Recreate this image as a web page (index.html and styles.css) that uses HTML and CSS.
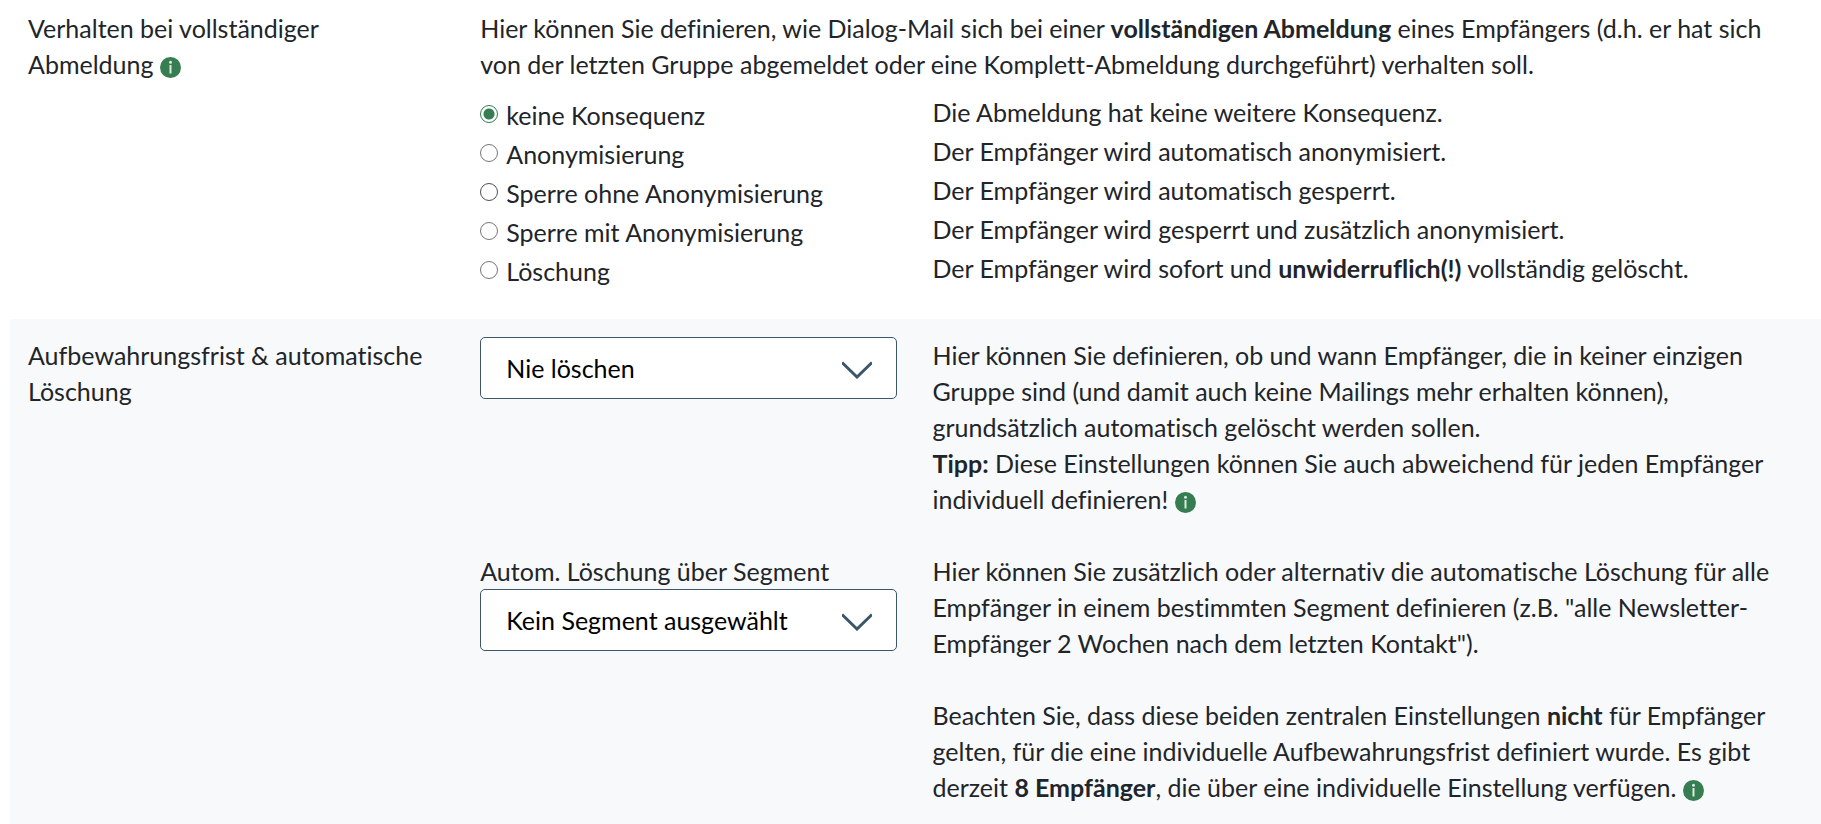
FILE: index.html
```html
<!DOCTYPE html>
<html lang="de">
<head>
<meta charset="utf-8">
<title>Einstellungen zur Abmeldung</title>
<link rel="stylesheet" href="styles.css">
</head>
<body>
<svg class="sprite" aria-hidden="true">
  <symbol id="info" viewBox="0 0 21 21">
    <circle cx="10.5" cy="10.5" r="10.5" fill="#367d52"/>
    <circle cx="10.5" cy="5.2" r="1.5" fill="#dcebe1"/>
    <path d="M10.5 8v8.5" stroke="#dcebe1" stroke-width="2"/>
  </symbol>
  <symbol id="chevron" viewBox="0 0 30 18">
    <path d="M0 1.5 15 16 30 1.5" fill="none" stroke="#3b566b" stroke-width="3"/>
  </symbol>
</svg>
<main class="settings">
  <section class="row">
    <div class="title">Verhalten bei vollständiger Abmeldung <svg class="info" role="img" aria-label="Info"><use href="#info"/></svg></div>
    <div class="body">
      <p class="intro">Hier können Sie definieren, wie Dialog-Mail sich bei einer <b>vollständigen Abmeldung</b> eines Empfängers (d.h. er hat sich von der letzten Gruppe abgemeldet oder eine Komplett-Abmeldung durchgeführt) verhalten soll.</p>
      <div class="options">
        <div class="choice"><input type="radio" name="optout" id="o1" checked><label for="o1">keine Konsequenz</label></div>
        <div class="effect">Die Abmeldung hat keine weitere Konsequenz.</div>
        <div class="choice"><input type="radio" name="optout" id="o2"><label for="o2">Anonymisierung</label></div>
        <div class="effect">Der Empfänger wird automatisch anonymisiert.</div>
        <div class="choice"><input class="active" type="radio" name="optout" id="o3"><label for="o3">Sperre ohne Anonymisierung</label></div>
        <div class="effect">Der Empfänger wird automatisch gesperrt.</div>
        <div class="choice"><input type="radio" name="optout" id="o4"><label for="o4">Sperre mit Anonymisierung</label></div>
        <div class="effect">Der Empfänger wird gesperrt und zusätzlich anonymisiert.</div>
        <div class="choice"><input type="radio" name="optout" id="o5"><label for="o5">Löschung</label></div>
        <div class="effect">Der Empfänger wird sofort und <b>unwiderruflich(!)</b> vollständig gelöscht.</div>
      </div>
    </div>
  </section>
  <section class="row shaded">
    <label class="title" for="retention">Aufbewahrungsfrist &amp; automatische Löschung</label>
    <div class="body fields">
      <div class="select">
        <select id="retention"><option>Nie löschen</option></select>
        <svg class="chevron" aria-hidden="true"><use href="#chevron"/></svg>
      </div>
      <p class="help">Hier können Sie definieren, ob und wann Empfänger, die in keiner einzigen Gruppe sind (und damit auch keine Mailings mehr erhalten können), grundsätzlich automatisch gelöscht werden sollen.<br><b>Tipp:</b> Diese Einstellungen können Sie auch abweichend für jeden Empfänger individuell definieren! <svg class="info" role="img" aria-label="Info"><use href="#info"/></svg></p>
      <div>
        <label for="segment">Autom. Löschung über Segment</label>
        <div class="select">
          <select id="segment"><option>Kein Segment ausgewählt</option></select>
          <svg class="chevron" aria-hidden="true"><use href="#chevron"/></svg>
        </div>
      </div>
      <div class="help">
        <p>Hier können Sie zusätzlich oder alternativ die automatische Löschung für alle Empfänger in einem bestimmten Segment definieren (z.B. "alle Newsletter-Empfänger 2 Wochen nach dem letzten Kontakt").</p>
        <p>Beachten Sie, dass diese beiden zentralen Einstellungen <b>nicht</b> für Empfänger gelten, für die eine individuelle Aufbewahrungsfrist definiert wurde. Es gibt derzeit <b>8 Empfänger</b>, die über eine individuelle Einstellung verfügen. <svg class="info" role="img" aria-label="Info"><use href="#info"/></svg></p>
      </div>
    </div>
  </section>
</main>
</body>
</html>
```
FILE: styles.css
```css
* { box-sizing: border-box; }
body {
  margin: 0;
  background: #fff;
  color: #212529;
  font: 25px/36px Lato, "Open Sans", sans-serif;
  font-variant-ligatures: none;
}
p { margin: 0; }
.sprite { position: absolute; width: 0; height: 0; }
.settings { margin-left: 10px; }
.row {
  display: grid;
  grid-template-columns: repeat(4, minmax(0, 1fr));
  column-gap: 36px;
  padding: 10px 20px 30px 18px;
}
.shaded { background: #f8f9fb; padding: 18px 20px 19px 18px; }
.body { grid-column: span 3; }
.options, .fields {
  display: grid;
  grid-template-columns: repeat(3, minmax(0, 1fr));
  column-gap: 36px;
}
.options { padding-top: 12px; }
.fields { row-gap: 36px; align-items: start; }
.effect, .help { grid-column: span 2; }
.effect { padding-bottom: 3px; }
.choice { display: flex; align-items: flex-start; gap: 8px; padding-top: 3px; }
.choice input {
  appearance: none;
  flex: none;
  width: 18px;
  height: 18px;
  margin: 8px 0 0;
  border: 1px solid #767676;
  border-radius: 50%;
  background: #fff;
}
.choice input.active { border-color: #4f4f4f; }
.choice input:checked {
  border-color: #367d52;
  background: radial-gradient(circle, #367d52 5px, #fff 6px);
}
.info { width: 21px; height: 21px; vertical-align: -4px; }
.help p + p { margin-top: 36px; }
.select { position: relative; }
.select select {
  display: block;
  appearance: none;
  width: 100%;
  height: 62px;
  padding: 0 60px 0 25px;
  border: 1px solid #3b566b;
  border-radius: 5px;
  background: #fff;
  color: #000;
  font: inherit;
}
.chevron {
  position: absolute;
  right: 25px;
  top: 24px;
  width: 30px;
  height: 18px;
  pointer-events: none;
}
```
